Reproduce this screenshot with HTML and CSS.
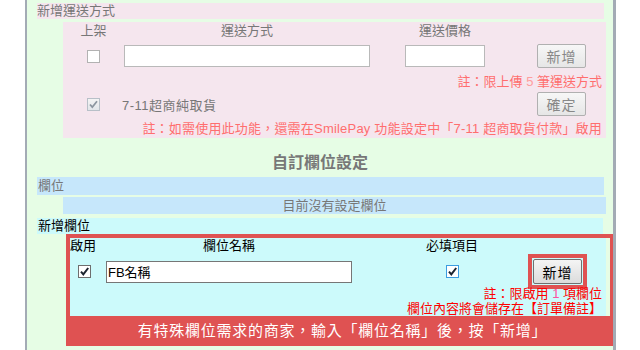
FILE: index.html
```html
<!DOCTYPE html>
<html lang="zh-Hant">

<head>
    <meta charset="UTF-8">
    <meta name="viewport" content="width=device-width, initial-scale=1.0">
    <title>運送方式與自訂欄位</title>

    <link rel="stylesheet" href="styles.css">
</head>

<body>
    <div class="panel">
        <div class="secHead">新增運送方式</div>

        <div class="shipBox">
            <div class="th">上架</div>
            <div class="th">運送方式</div>
            <div class="th">運送價格</div>
            <div></div>

            <div class="cell mid"><span class="chk"></span></div>
            <div class="cell"><input class="txt shipName" type="text"></div>
            <div class="cell mid"><input class="txt shipPrice" type="text"></div>
            <div class="cell end"><button class="btn">新增</button></div>

            <div class="note">註：限上傳 <span class="num">5</span> 筆運送方式</div>

            <div class="cell mid">
                <span class="chk chkOff">
                    <svg width="11" height="11" viewBox="0 0 11 11"><path d="M2 5.5 L4.3 8.2 L9 2.2" fill="none" stroke="#8c96a0" stroke-width="1.8"/></svg>
                </span>
            </div>
            <div class="cell label">7-11超商純取貨</div>
            <div></div>
            <div class="cell end"><button class="btn">確定</button></div>

            <div class="note wide">註：如需使用此功能，還需在SmilePay 功能設定中「7-11 超商取貨付款」啟用</div>
        </div>

        <!-- 自訂欄位 -->
        <div class="title">自訂欄位設定</div>
        <div class="bar">欄位</div>
        <div class="bar barSub">目前沒有設定欄位</div>
        <div class="newHead">新增欄位</div>

        <div class="hl">
            <div class="fieldBox">
                <div class="fh left">啟用</div>
                <div class="fh">欄位名稱</div>
                <div class="fh col3">必填項目</div>
                <div></div>

                <div class="cell">
                    <span class="chk chkOn">
                        <svg width="11" height="11" viewBox="0 0 11 11"><path d="M2 5.6 L4.3 8.3 L9.2 2" fill="none" stroke="#1c2430" stroke-width="2"/></svg>
                    </span>
                </div>
                <div class="cell"><input class="txt fieldName" type="text" value="FB名稱"></div>
                <div class="cell mid col3">
                    <span class="chk chkOn chkFocus">
                        <svg width="11" height="11" viewBox="0 0 11 11"><path d="M2 5.6 L4.3 8.3 L9.2 2" fill="none" stroke="#1c2430" stroke-width="2"/></svg>
                    </span>
                </div>
                <div class="cell end"><span class="btnHl"><button class="btn btnOn">新增</button></span></div>

                <div class="notes">註：限啟用 <span class="num2">1</span> 項欄位<br>欄位內容將會儲存在【訂單備註】</div>
            </div>
            <div class="hlTip">有特殊欄位需求的商家，輸入「欄位名稱」後，按「新增」</div>
        </div>
    </div>
</body>

</html>
```

FILE: styles.css
```css
body {
    margin: 0;
    background-color: white;
    font-family: "Liberation Sans", "Noto Sans CJK TC", sans-serif;
    font-size: 13px;
    color: #777;
}

.panel {
    margin-left: 25px;
    width: 586px;
    padding: 3px 0 10px 0;
    border-left: 2px solid #a3abb5;
    border-right: 3px solid #a3abb5;
    background-color: #e6fde5;
}

/* 運送方式 */
.secHead {
    margin: 0 9px 0 10px;
    height: 16px;
    line-height: 16px;
    background-color: #f5e6ee;
}

.shipBox {
    display: grid;
    grid-template-columns: 61px 246px 150px 1fr;
    grid-template-rows: 22px 24px 24px 24px 22px;
    margin: 3px 7px 0 36px;
    background-color: #f5e6ee;
}

.th {
    align-self: start;
    line-height: 18px;
    text-align: center;
}

.cell {
    display: flex;
    align-items: center;
}

.mid {
    justify-content: center;
}

.end {
    justify-content: flex-end;
    padding-right: 20px;
}

.label {
    margin-left: -2px;
    letter-spacing: 0.5px;
}

.note {
    grid-column: 1 / 5;
    align-self: center;
    padding-right: 4px;
    text-align: right;
    color: #ff6e6e;
}

.note.wide {
    letter-spacing: 0.2px;
}

.num {
    color: #ff9d9d;
}

.txt {
    box-sizing: border-box;
    height: 22px;
    margin: 0;
    padding: 0 2px;
    border: 1px solid #b9b9b9;
    background-color: white;
    font-family: "Liberation Sans", "Noto Sans CJK TC", sans-serif;
    font-size: 13px;
    outline: none;
}

.shipName {
    width: 246px;
}

.shipPrice {
    width: 80px;
}

.btn {
    box-sizing: border-box;
    width: 49px;
    height: 24px;
    margin: 0;
    padding: 0;
    border: 1px solid #b0b0b0;
    border-radius: 2px;
    background: linear-gradient(#f7f7f7, #e6e6e6);
    font-family: "Liberation Sans", "Noto Sans CJK TC", sans-serif;
    font-size: 14px;
    color: #888;
    letter-spacing: 1px;
}

/* checkbox */
.chk {
    display: inline-flex;
    align-items: center;
    justify-content: center;
    box-sizing: border-box;
    width: 13px;
    height: 13px;
    border: 1px solid #b2b2b2;
    background-color: white;
}

.chkOff {
    border-color: #b8c0c8;
    background: linear-gradient(#f4f4f4, #e2e6ea);
}

.chkOn {
    margin-left: 8px;
    border-color: #6e6e6e;
}

.chkFocus {
    margin-left: 0;
    border-color: #3c9ce0;
}

/* 自訂欄位 */
.title {
    padding-top: 14px;
    height: 22px;
    margin-bottom: 3px;
    line-height: 22px;
    text-align: center;
    font-size: 16px;
    font-weight: bold;
    color: #777;
}

.bar {
    margin: 0 9px 0 10px;
    height: 18px;
    padding-left: 1px;
    line-height: 18px;
    background-color: #c6e7fb;
}

.barSub {
    margin: 2px 7px 0 36px;
    height: 17px;
    padding-left: 0;
    line-height: 17px;
    text-align: center;
}

.newHead {
    margin: 4px 10px 0 10px;
    height: 16px;
    padding-left: 1px;
    line-height: 16px;
    background-color: #ccfafb;
    color: black;
}

.hl {
    margin-left: 39px;
    border: 4px solid #df5252;
    border-right-width: 3px;
    border-bottom: none;
    background-color: #e6fde5;
}

.fieldBox {
    display: grid;
    grid-template-columns: 36px 246px 194px 60px;
    grid-template-rows: 16px 35px auto;
    width: 536px;
    background-color: #ccfafb;
    color: black;
}

.fh {
    line-height: 16px;
    text-align: center;
}

.fh.left {
    text-align: left;
}

.col3 {
    padding-left: 6px;
}

.fieldName {
    width: 246px;
    border-color: #767676;
    color: black;
    padding-left: 1px;
}

.btnHl {
    display: inline-block;
    margin-right: -1px;
    padding: 1px;
    border: 4px solid #df5252;
    line-height: 0;
}

.btn.btnOn {
    height: 25px;
    border-color: #707070;
    background: linear-gradient(#f4f4f4, #dcdcdc);
    color: black;
}

.notes {
    grid-column: 1 / 5;
    margin-top: -3px;
    padding-right: 4px;
    line-height: 15px;
    text-align: right;
    color: #ff0000;
}

.num2 {
    color: #ff4fa0;
}

.hlTip {
    height: 30px;
    padding-left: 5px;
    line-height: 30px;
    text-align: center;
    font-size: 15px;
    letter-spacing: 0.75px;
    color: white;
    background-color: #df5252;
}
```
